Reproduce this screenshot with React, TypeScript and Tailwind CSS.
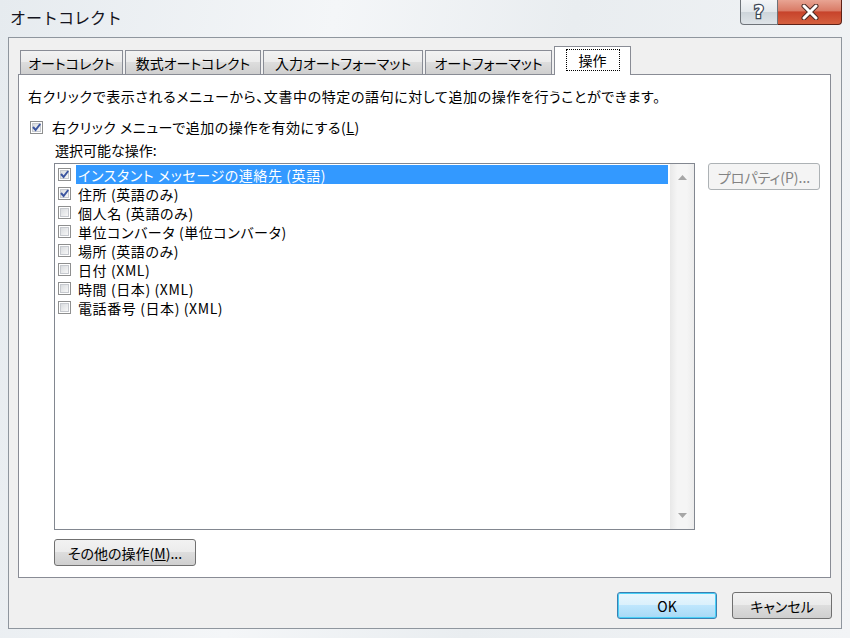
import React from "react";

const FONT = "font-['Meiryo_UI','Noto_Sans_CJK_JP',sans-serif] [font-feature-settings:'palt']";

const tabs = ["オートコレクト", "数式オートコレクト", "入力オートフォーマット", "オートフォーマット"];
const tabWidths = ["w-[103px]", "w-[136px]", "w-[160px]", "w-[127px]"];

const actions = [
  { label: "インスタント メッセージの連絡先 (英語)", checked: true, selected: true },
  { label: "住所 (英語のみ)", checked: true },
  { label: "個人名 (英語のみ)", checked: false },
  { label: "単位コンバータ (単位コンバータ)", checked: false },
  { label: "場所 (英語のみ)", checked: false },
  { label: "日付 (XML)", checked: false },
  { label: "時間 (日本) (XML)", checked: false },
  { label: "電話番号 (日本) (XML)", checked: false },
];

function CheckBox({ checked }: { checked: boolean }) {
  return (
    <span className="relative flex h-[13px] w-[13px] shrink-0 items-center justify-center border border-[#8e8f8f] bg-white">
      <span className="h-[9px] w-[9px] border border-[#c6c9ce] bg-gradient-to-br from-[#d9dcdf] to-[#f7f7f7]" />
      {checked && (
        <svg className="absolute left-[0px] top-[0px]" width="11" height="11" viewBox="0 0 11 11">
          <path d="M2 5 L4.6 8 L9.2 2" fill="none" stroke="#3b55a0" strokeWidth="2" />
        </svg>
      )}
    </span>
  );
}

function Button({
  children,
  className = "",
  disabled = false,
  primary = false,
}: {
  children: React.ReactNode;
  className?: string;
  disabled?: boolean;
  primary?: boolean;
}) {
  const look = disabled
    ? "border-[#adb2b5] bg-[#f4f4f4] text-[#838383]"
    : primary
      ? "border-[#3c7fb1] bg-[linear-gradient(#eaf6fd_0%,#d9f0fc_50%,#bee6fd_50%,#a7d9f5_100%)] shadow-[inset_0_0_0_1px_#48d0f7]"
      : "border-[#707070] bg-[linear-gradient(#f2f2f2_0%,#ebebeb_50%,#dddddd_50%,#cfcfcf_100%)]";
  return (
    <div
      className={`flex h-[27px] items-center justify-center rounded-[3px] border text-[14px] leading-none ${look} ${className}`}
    >
      {children}
    </div>
  );
}

export default function App() {
  return (
    <div
      className={`${FONT} flex h-[638px] w-[850px] flex-col overflow-hidden bg-[linear-gradient(100deg,#e6ebef_0%,#f4f6f8_35%,#e9edf0_60%,#f2f4f6_100%)] text-black`}
    >
      {/* title bar */}
      <div className="flex h-[37px] shrink-0 items-start">
        <div className="pl-[10px] pt-[6px] text-[16px] leading-[22px] text-[#141420] [font-feature-settings:normal]">
          オートコレクト
        </div>
        <div className="ml-auto mr-[8px] flex">
          <div className="flex h-[25px] w-[38px] items-center justify-center rounded-bl-[4px] border border-t-0 border-[#6e7379] bg-[linear-gradient(#f3f5f7_0%,#e2e7eb_50%,#cdd4da_50%,#dfe4e8_100%)]">
            <span className="font-['DejaVu_Sans',sans-serif] text-[17px] font-bold leading-none text-white [-webkit-text-stroke:2.5px_#3d4756] [paint-order:stroke_fill]">
              ?
            </span>
          </div>
          <div className="flex h-[25px] w-[64px] items-center justify-center rounded-br-[4px] border border-l-0 border-t-0 border-[#5e2117] bg-[linear-gradient(#e8a493_0%,#d97b66_45%,#c7432b_50%,#d5603f_100%)]">
            <svg width="20" height="16" viewBox="0 0 20 16">
              <path d="M4 2 L16 14 M16 2 L4 14" stroke="#4a2a24" strokeWidth="5" strokeLinecap="round" />
              <path d="M4 2 L16 14 M16 2 L4 14" stroke="#ffffff" strokeWidth="3" strokeLinecap="round" />
            </svg>
          </div>
        </div>
      </div>

      {/* client area */}
      <div className="mx-[8px] flex h-[592px] shrink-0 flex-col border border-[#8f969e] bg-[#f0f0f0] pl-[9px] pt-[8px]">
        {/* tabs */}
        <div className="flex h-[28px] items-end gap-[2px] pl-[2px]">
          {tabs.map((t, i) => (
            <div
              key={t}
              className={`${tabWidths[i]} flex h-[24px] items-center justify-center border border-b-0 border-[#898c95] bg-[linear-gradient(#f2f2f2_0%,#ebebeb_50%,#dddddd_50%,#cfcfcf_100%)] text-[14px] leading-none`}
            >
              {t}
            </div>
          ))}
          <div className="relative -mb-px flex h-[29px] w-[77px] items-center justify-center border border-b-0 border-[#898c95] bg-white pb-[2px]">
            <span className="border border-dotted border-black px-[12px] py-[2px] text-[14px] leading-[16px]">操作</span>
          </div>
        </div>

        {/* panel */}
        <div className="flex h-[504px] w-[813px] flex-col border border-[#898c95] bg-white pl-[9px]">
          <div className="mt-[11px] h-[20px] text-[14px] leading-[20px] tracking-[0.6px]">
            右クリックで表示されるメニューから、文書中の特定の語句に対して追加の操作を行うことができます。
          </div>
          <div className="mt-[11px] flex h-[20px] items-center gap-[9px] pl-[2px]">
            <CheckBox checked />
            <span className="text-[14px] leading-[20px] tracking-[0.55px]">
              右クリック メニューで追加の操作を有効にする(<span className="underline">L</span>)
            </span>
          </div>
          <div className="mt-[3px] h-[20px] pl-[27px] text-[14px] leading-[20px]">選択可能な操作:</div>

          <div className="mt-[3px] flex items-start pl-[26px]">
            <div className="flex h-[367px] w-[641px] border border-[#828790] bg-white">
              <div className="flex flex-1 flex-col pl-[3px] pt-[1px]">
                {actions.map((a) => (
                  <div key={a.label} className="flex h-[19px] items-center gap-[5px]">
                    <CheckBox checked={a.checked} />
                    <span
                      className={`mr-[2px] flex h-[19px] flex-1 items-center px-[2px] text-[14px] leading-none tracking-[0.6px] ${
                        a.selected ? "bg-[#3399ff] text-white" : ""
                      }`}
                    >
                      {a.label}
                    </span>
                  </div>
                ))}
              </div>
              <div className="flex w-[24px] flex-col items-center justify-between bg-[linear-gradient(90deg,#e8e8e8,#f5f5f5_30%,#f5f5f5_70%,#ececec)] py-[11px]">
                <svg width="9" height="5" viewBox="0 0 9 5">
                  <path d="M0 5 L4.5 0 L9 5 Z" fill="#a6a6a6" />
                </svg>
                <svg width="9" height="5" viewBox="0 0 9 5">
                  <path d="M0 0 L9 0 L4.5 5 Z" fill="#a6a6a6" />
                </svg>
              </div>
            </div>
            <Button disabled className="ml-[13px] w-[112px]">
              プロパティ(P)...
            </Button>
          </div>

          <div className="mt-[9px] pl-[26px]">
            <Button className="w-[142px]">
              その他の操作(<span className="underline">M</span>)...
            </Button>
          </div>
        </div>

        {/* dialog buttons */}
        <div className="mt-[14px] flex justify-end gap-[15px] pr-[9px]">
          <Button primary className="h-[26px] w-[100px]">
            OK
          </Button>
          <Button className="h-[26px] w-[100px]">キャンセル</Button>
        </div>
      </div>
    </div>
  );
}
